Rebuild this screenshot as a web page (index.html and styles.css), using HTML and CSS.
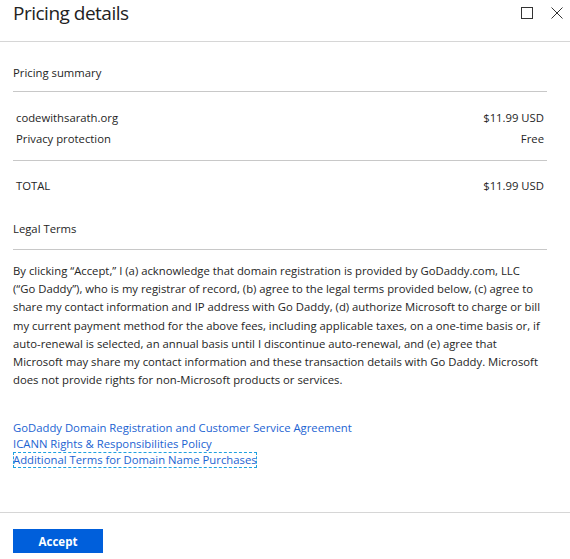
FILE: index.html
```html
<!DOCTYPE html>
<html>
<head>
<meta charset="utf-8">
<link rel="stylesheet" href="styles.css">
</head>
<body>
<div class="blade">
  <header class="header">
    <h1 class="title">Pricing details</h1>
    <div class="controls">
      <svg class="icon" width="12" height="12" viewBox="0 0 12 12"><rect x="0.5" y="0.5" width="11" height="11" fill="none" stroke="#333" stroke-width="1"/></svg>
      <svg class="icon" width="12" height="12" viewBox="0 0 12 12"><path d="M0.5 0.5 L11.5 11.5 M11.5 0.5 L0.5 11.5" stroke="#333" stroke-width="1" fill="none"/></svg>
    </div>
  </header>
  <main class="content">
    <div class="section-label">Pricing summary</div>
    <div class="rows">
      <div class="row"><span>codewithsarath.org</span><span>$11.99 USD</span></div>
      <div class="row"><span>Privacy protection</span><span>Free</span></div>
    </div>
    <div class="rows total">
      <div class="row"><span>TOTAL</span><span>$11.99 USD</span></div>
    </div>
    <div class="section-label legal-label">Legal Terms</div>
    <p class="legal">By clicking “Accept,” I (a) acknowledge that domain registration is provided by GoDaddy.com, LLC<br>(“Go Daddy”), who is my registrar of record, (b) agree to the legal terms provided below, (c) agree to<br>share my contact information and IP address with Go Daddy, (d) authorize Microsoft to charge or bill<br>my current payment method for the above fees, including applicable taxes, on a one-time basis or, if<br>auto-renewal is selected, an annual basis until I discontinue auto-renewal, and (e) agree that<br>Microsoft may share my contact information and these transaction details with Go Daddy. Microsoft<br>does not provide rights for non-Microsoft products or services.</p>
    <div class="links">
      <a href="#">GoDaddy Domain Registration and Customer Service Agreement</a>
      <a href="#">ICANN Rights &amp; Responsibilities Policy</a>
      <a href="#" class="focused">Additional Terms for Domain Name Purchases</a>
    </div>
  </main>
  <footer class="footer">
    <button class="accept">Accept</button>
  </footer>
</div>
</body>
</html>
```
FILE: styles.css
```css
* { box-sizing: border-box; }
html, body { margin: 0; padding: 0; background: #fff; }
body {
  font-family: "Open Sans", "Noto Sans", "Liberation Sans", sans-serif;
  font-size: 11.3px;
  color: #252525;
  width: 570px;
  height: 559px;
  overflow: hidden;
}
.blade { display: flex; flex-direction: column; height: 559px; }
.header {
  height: 42px;
  border-bottom: 1px solid #d6d6d6;
  display: flex;
  justify-content: space-between;
  align-items: flex-start;
  padding: 0 0 0 13px;
}
.title {
  margin: 0;
  font-weight: 400;
  font-size: 19px;
  letter-spacing: -0.5px;
  line-height: 26px;
  color: #222;
}
.controls { display: flex; gap: 18px; padding: 7px 7px 0 0; }
.icon { display: block; }
.content { flex: 1; padding: 0 23px 0 13px; }
.section-label { margin-top: 22px; line-height: 18px; padding-bottom: 9px; border-bottom: 1px solid #c8c8c8; }
.rows { padding: 15px 3px 11px 3px; border-bottom: 1px solid #c8c8c8; }
.row { display: flex; justify-content: space-between; line-height: 21px; }
.total { border-bottom: none; padding-top: 14px; padding-bottom: 0; }
.legal-label { margin-top: 24px; padding-bottom: 11px; }
.legal { margin: 12px 0 0 0; line-height: 18.2px; white-space: nowrap; }
.links { display: flex; flex-direction: column; align-items: flex-start; margin-top: 31px; }
.links a { color: #1c63d2; text-decoration: none; line-height: 16px; }
.links a.focused { outline: 1px dashed #1ea0e0; outline-offset: -1px; }
.footer { height: 47px; border-top: 1px solid #d6d6d6; padding: 16px 0 0 13px; }
.accept {
  width: 90px;
  height: 24px;
  border: none;
  background: #005fdb;
  color: #fff;
  font-family: inherit;
  font-weight: 700;
  font-size: 11.5px;
  padding: 0;
}
```
